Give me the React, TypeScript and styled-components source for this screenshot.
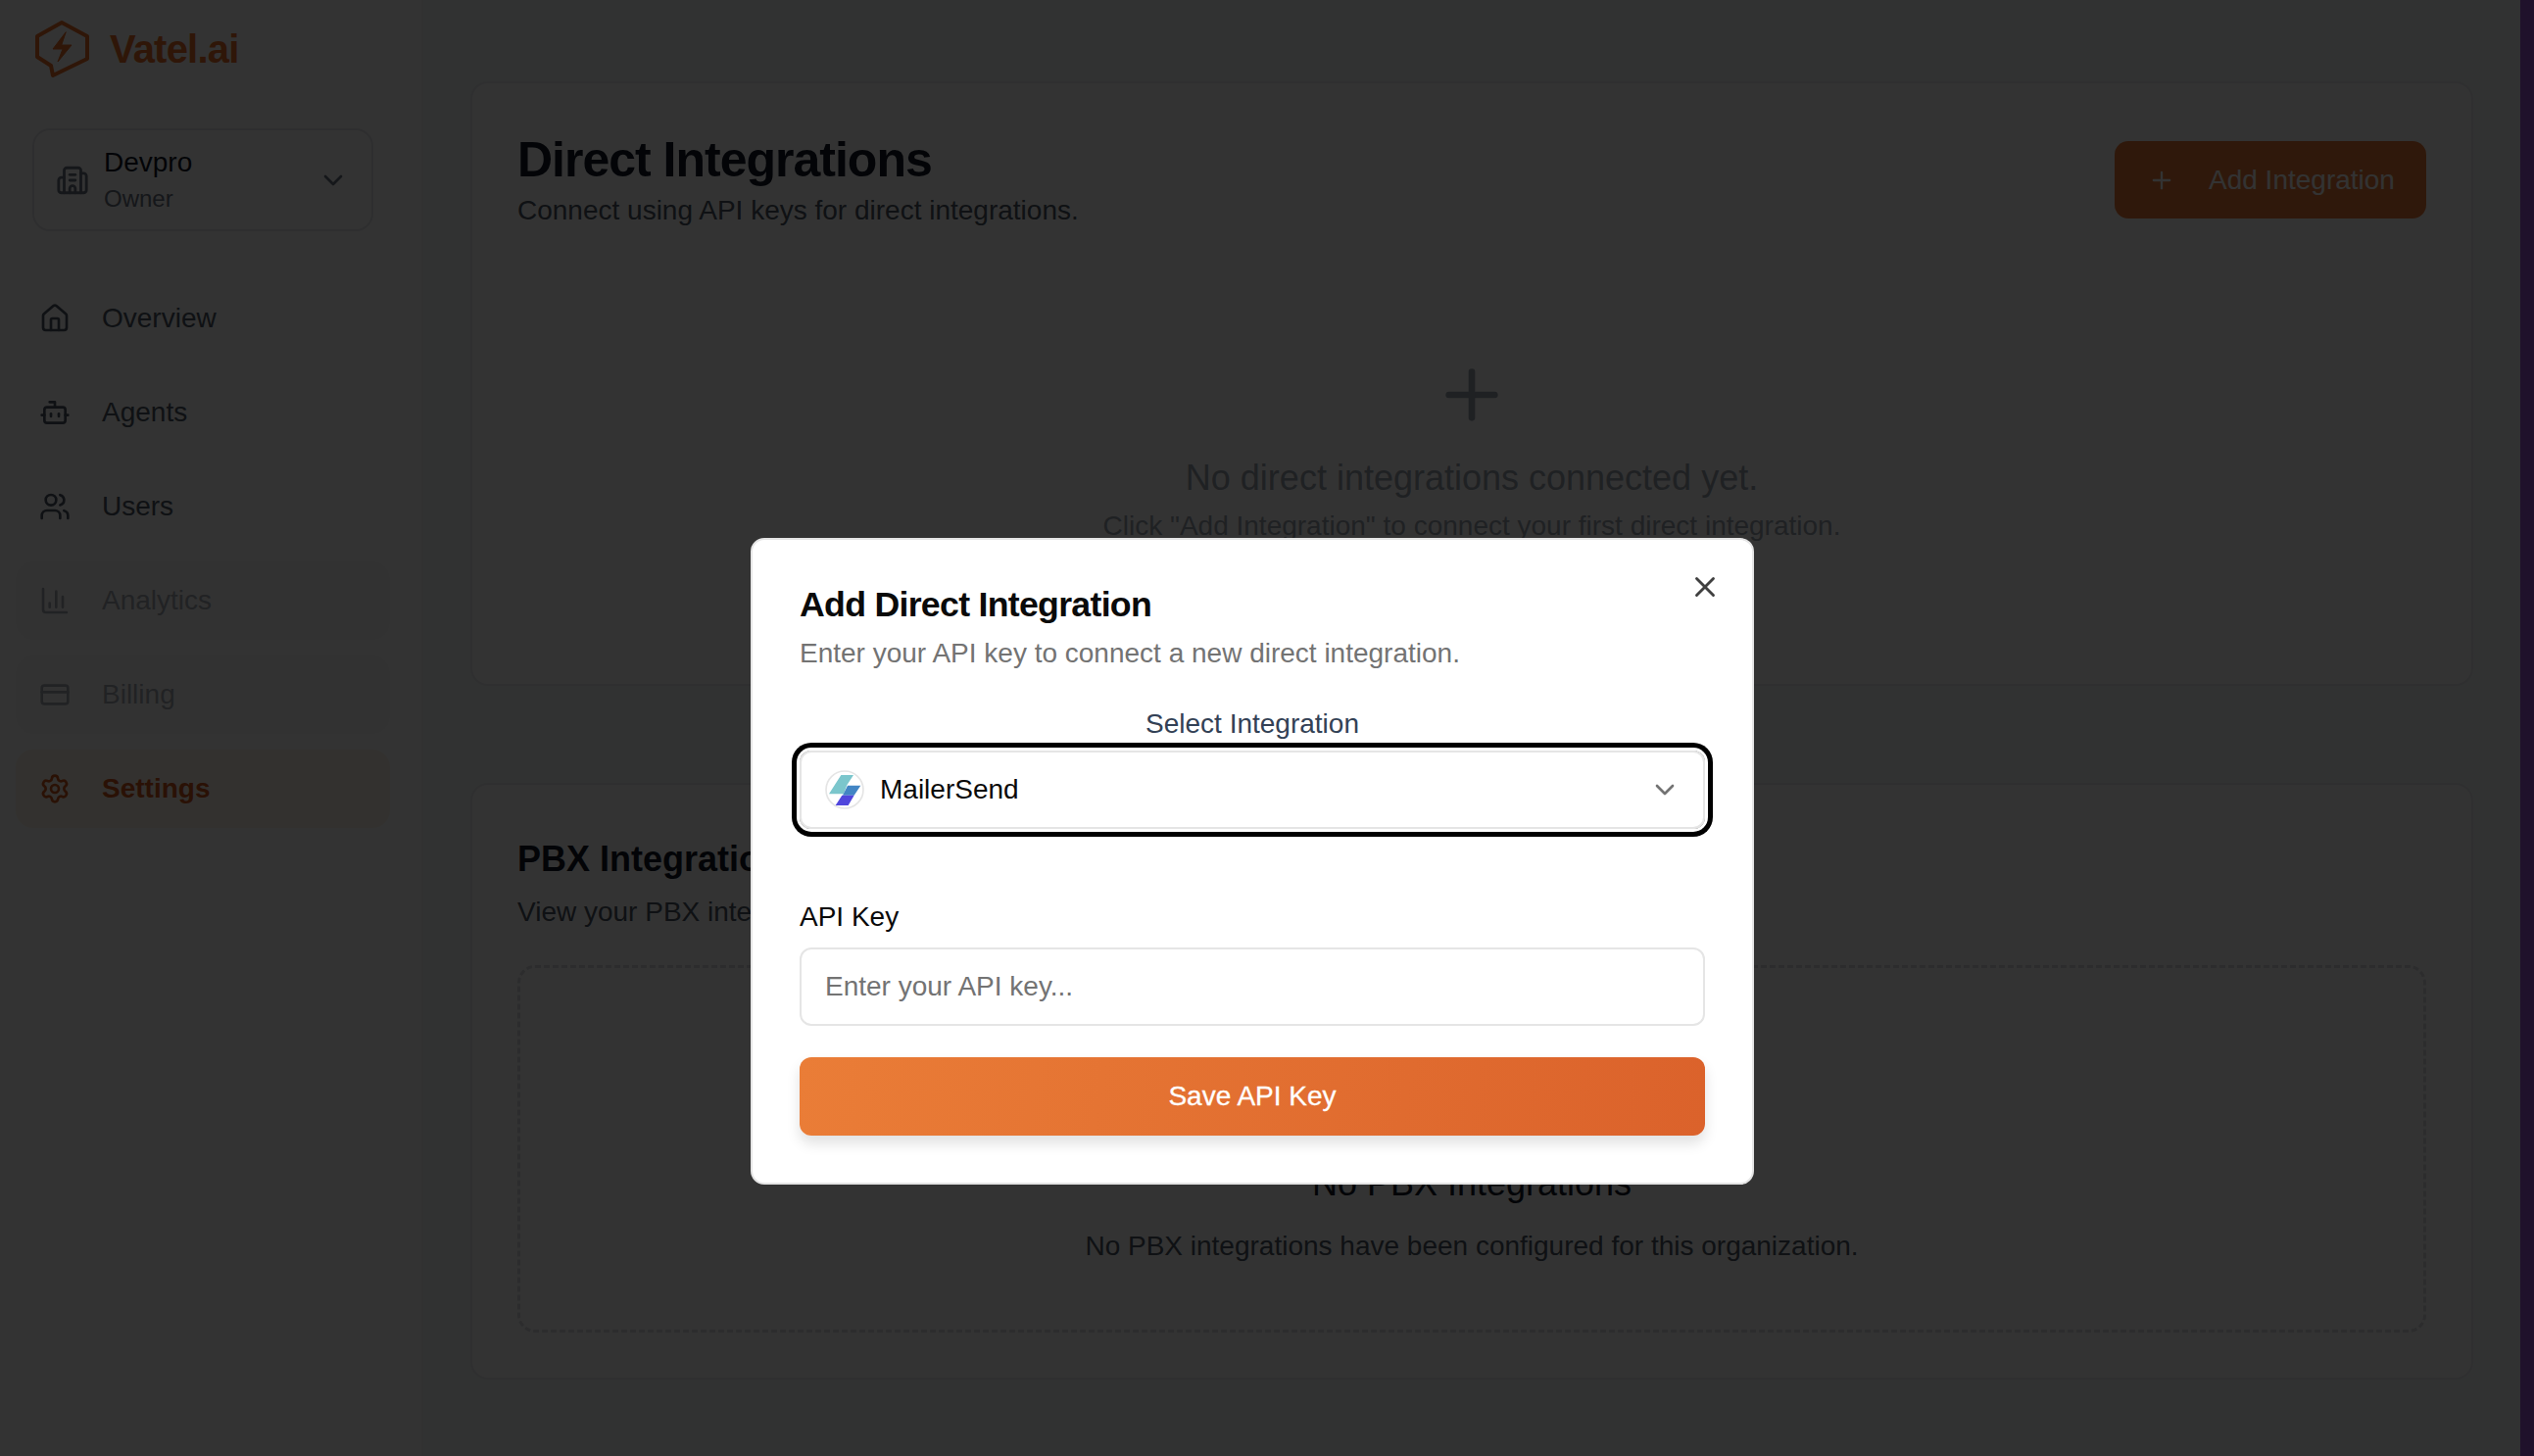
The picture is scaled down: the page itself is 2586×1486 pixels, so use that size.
import React from 'react';
import styled, { createGlobalStyle } from 'styled-components';
import { BarChart3, Bot, Building2, ChevronDown, CreditCard, House, Plus, Settings, Users, X } from 'lucide-react';

const GlobalStyle = createGlobalStyle`
    html, body {
        margin: 0;
        height: 100%;
        background: #9c55d4;
    }
    * {
        box-sizing: border-box;
    }
    body {
        font-family: 'Liberation Sans', Arial, sans-serif;
        overflow: hidden;
    }
`;

const Page = styled.div`
    display: flex;
    width: 2572px;
    height: 1486px;
    background: #f6fbf9;
`;

const Sidebar = styled.aside`
    display: flex;
    flex-direction: column;
    flex: 0 0 432px;
    background: #fff;
    border-right: 2px solid #f3f4f6;
    padding: 20px 32px 0 16px;
`;

const Brand = styled.div`
    display: flex;
    align-items: center;
    gap: 20px;
    height: 60px;
    padding-left: 20px;
    font-size: 40px;
    font-weight: 700;
    letter-spacing: -0.8px;
    color: #ea6f2a;
`;

const OrgSwitcher = styled.div`
    display: flex;
    align-items: center;
    width: 348px;
    height: 105px;
    margin: 51px 0 49px 17px;
    padding: 0 23px 0 22px;
    border: 2px solid #e5e7eb;
    border-radius: 18px;
    color: #6b7280;
`;

const OrgText = styled.div`
    display: flex;
    flex-direction: column;
    flex: 1;
    margin-left: 15px;
`;

const OrgName = styled.span`
    font-size: 28px;
    line-height: 38px;
    color: #111827;
`;

const OrgRole = styled.span`
    font-size: 24px;
    line-height: 35px;
    color: #6b7280;
`;

const Nav = styled.nav`
    display: flex;
    flex-direction: column;
    gap: 16px;
`;

const NavItem = styled.div<{ $active?: boolean; $disabled?: boolean }>`
    display: flex;
    align-items: center;
    gap: 32px;
    width: 382px;
    height: 80px;
    padding-left: 24px;
    border-radius: 18px;
    font-size: 28px;
    font-weight: ${(props) => (props.$active ? 700 : 400)};
    color: ${(props) => (props.$active ? '#d2571d' : props.$disabled ? '#a6abb2' : '#4b5563')};
    background: ${(props) => (props.$active ? '#fdf6e9' : props.$disabled ? '#fbfbfb' : 'transparent')};
`;

const Main = styled.main`
    display: flex;
    flex-direction: column;
    flex: 1;
    gap: 99px;
    padding: 83px 48px 0;
`;

const Card = styled.section<{ $height: number }>`
    height: ${(props) => props.$height}px;
    padding: 0 46px;
    background: #fff;
    border: 2px solid #e9ebee;
    border-radius: 18px;
`;

const CardHeader = styled.div`
    display: flex;
    align-items: flex-start;
    justify-content: space-between;
    padding-top: 49px;
`;

const Heading = styled.h2`
    margin: 0;
    font-size: 50px;
    line-height: 58px;
    font-weight: 700;
    letter-spacing: -0.02em;
    color: #111827;
`;

const SubHeading = styled.p`
    margin: 0;
    font-size: 28px;
    line-height: 36px;
    color: #4b5563;
`;

const HeaderSub = styled(SubHeading)`
    margin-top: 5px;
`;

const AddButton = styled.button`
    display: flex;
    align-items: center;
    gap: 34px;
    width: 318px;
    height: 79px;
    margin-top: 10px;
    padding: 0 0 0 34px;
    border: 0;
    border-radius: 14px;
    background: #e97a3a;
    color: #fff;
    font: 400 28px 'Liberation Sans', Arial, sans-serif;
    white-space: nowrap;
`;

const EmptyState = styled.div`
    display: flex;
    flex-direction: column;
    align-items: center;
    margin-top: 130px;
    color: #9ca3af;
`;

const EmptyTitle = styled.div`
    margin-top: 23px;
    font-size: 36px;
    line-height: 44px;
    color: #9ca3af;
`;

const EmptyHint = styled.div`
    margin-top: 9px;
    font-size: 28px;
    line-height: 36px;
    color: #9ca3af;
`;

const PbxTitle = styled.h3`
    margin: 0;
    padding-top: 56px;
    font-size: 36px;
    line-height: 40px;
    font-weight: 700;
    color: #111827;
`;

const PbxSub = styled(SubHeading)`
    margin-top: 16px;
`;

const DashedBox = styled.div`
    display: flex;
    flex-direction: column;
    align-items: center;
    justify-content: flex-end;
    height: 375px;
    margin-top: 36px;
    padding-bottom: 67px;
    border: 3px dashed #d9dce1;
    border-radius: 18px;
`;

const PbxEmptyTitle = styled.div`
    font-size: 36px;
    line-height: 40px;
    color: #111827;
`;

const PbxEmptyHint = styled(SubHeading)`
    margin-top: 26px;
`;

const Overlay = styled.div`
    position: fixed;
    inset: 0;
    background: rgba(0, 0, 0, 0.8);
`;

const Modal = styled.div`
    position: fixed;
    left: 766px;
    top: 549px;
    width: 1024px;
    height: 660px;
    padding: 42px 48px 0 48px;
    background: #fff;
    border: 2px solid #e5e5e5;
    border-radius: 14px;
`;

const CloseButton = styled.span`
    position: absolute;
    top: 31px;
    right: 31px;
    display: flex;
    color: #404040;
`;

const ModalTitle = styled.h2`
    margin: 0;
    font-size: 35.7px;
    line-height: 48px;
    font-weight: 700;
    letter-spacing: -0.02em;
    color: #0a0a0a;
`;

const ModalDesc = styled.p`
    margin: 8px 0 0;
    font-size: 28px;
    line-height: 36px;
    color: #737373;
`;

const SelectLabel = styled.div`
    margin-top: 36px;
    text-align: center;
    font-size: 28px;
    line-height: 36px;
    color: #334155;
`;

const SelectBox = styled.div`
    display: flex;
    align-items: center;
    gap: 16px;
    width: 924px;
    height: 80px;
    margin-top: 9px;
    padding: 0 23px 0 24px;
    border: 2px solid #e5e5e5;
    border-radius: 12px;
    box-shadow: 0 0 0 3px #fff, 0 0 0 8px #000;
    font-size: 28px;
    color: #0a0a0a;
`;

const SelectValue = styled.span`
    flex: 1;
`;

const FieldLabel = styled.div`
    margin-top: 72px;
    font-size: 28px;
    line-height: 36px;
    color: #0a0a0a;
`;

const TextInput = styled.input`
    display: block;
    width: 924px;
    height: 80px;
    margin-top: 13px;
    padding: 0 24px;
    border: 2px solid #e5e5e5;
    border-radius: 12px;
    outline: none;
    font: 400 28px 'Liberation Sans', Arial, sans-serif;
    &::placeholder {
        color: #737373;
        opacity: 1;
    }
`;

const SaveButton = styled.button`
    display: block;
    width: 924px;
    height: 80px;
    margin-top: 32px;
    border: 0;
    border-radius: 12px;
    background: linear-gradient(100deg, #ea7d37, #db622b);
    box-shadow: 0 8px 14px rgba(0, 0, 0, 0.12);
    color: #fff;
    font: 400 28px 'Liberation Sans', Arial, sans-serif;
    -webkit-text-stroke: 0.3px #fff;
`;

const LogoMark = () => (
    <svg width="56" height="60" viewBox="36 20 56 60" fill="none" stroke="currentColor" strokeWidth="4" strokeLinejoin="round" strokeLinecap="round">
        <path d="M63 23 L89 37 V60 L54 77 L52 67 L38 58 V37 Z" />
        <path d="M67 33 L54 50 H64 L59 63 L73 46 H63 Z" fill="currentColor" strokeWidth="1" />
    </svg>
);

const MailerSendLogo = () => (
    <svg width="40" height="40" viewBox="126 50 120 120">
        <circle cx="186" cy="110" r="57" fill="#fff" stroke="#e5e5e5" strokeWidth="5" />
        <path d="M175 65 H213 L193 96 L183 123 H138 Z" fill="#7bc6cc" />
        <path d="M195 97 H235 L215 127 H180 Z" fill="#4285c4" />
        <path d="M178 127 H215 L197 158 H158 Z" fill="#5046dc" />
    </svg>
);

const navItems = [
    { label: 'Overview', icon: House },
    { label: 'Agents', icon: Bot },
    { label: 'Users', icon: Users },
    { label: 'Analytics', icon: BarChart3, disabled: true },
    { label: 'Billing', icon: CreditCard, disabled: true },
    { label: 'Settings', icon: Settings, active: true },
];

const App: React.FC = () => {
    return (
        <>
            <GlobalStyle />
            <Page>
                <Sidebar>
                    <Brand>
                        <LogoMark />
                        Vatel.ai
                    </Brand>
                    <OrgSwitcher>
                        <Building2 size={34} strokeWidth={2} />
                        <OrgText>
                            <OrgName>Devpro</OrgName>
                            <OrgRole>Owner</OrgRole>
                        </OrgText>
                        <ChevronDown size={32} strokeWidth={2} />
                    </OrgSwitcher>
                    <Nav>
                        {navItems.map(({ label, icon: Icon, active, disabled }) => (
                            <NavItem key={label} $active={active} $disabled={disabled}>
                                <Icon size={32} strokeWidth={2} />
                                {label}
                            </NavItem>
                        ))}
                    </Nav>
                </Sidebar>
                <Main>
                    <Card $height={617}>
                        <CardHeader>
                            <div>
                                <Heading>Direct Integrations</Heading>
                                <HeaderSub>Connect using API keys for direct integrations.</HeaderSub>
                            </div>
                            <AddButton>
                                <Plus size={28} strokeWidth={2} />
                                Add Integration
                            </AddButton>
                        </CardHeader>
                        <EmptyState>
                            <Plus size={80} strokeWidth={2} />
                            <EmptyTitle>No direct integrations connected yet.</EmptyTitle>
                            <EmptyHint>Click "Add Integration" to connect your first direct integration.</EmptyHint>
                        </EmptyState>
                    </Card>
                    <Card $height={609}>
                        <PbxTitle>PBX Integrations</PbxTitle>
                        <PbxSub>View your PBX integrations.</PbxSub>
                        <DashedBox>
                            <PbxEmptyTitle>No PBX Integrations</PbxEmptyTitle>
                            <PbxEmptyHint>No PBX integrations have been configured for this organization.</PbxEmptyHint>
                        </DashedBox>
                    </Card>
                </Main>
            </Page>
            <Overlay />
            <Modal>
                <CloseButton>
                    <X size={34} strokeWidth={2} />
                </CloseButton>
                <ModalTitle>Add Direct Integration</ModalTitle>
                <ModalDesc>Enter your API key to connect a new direct integration.</ModalDesc>
                <SelectLabel>Select Integration</SelectLabel>
                <SelectBox>
                    <MailerSendLogo />
                    <SelectValue>MailerSend</SelectValue>
                    <ChevronDown size={32} strokeWidth={2} color="#737373" />
                </SelectBox>
                <FieldLabel>API Key</FieldLabel>
                <TextInput placeholder="Enter your API key..." />
                <SaveButton>Save API Key</SaveButton>
            </Modal>
        </>
    );
};

export default App;
